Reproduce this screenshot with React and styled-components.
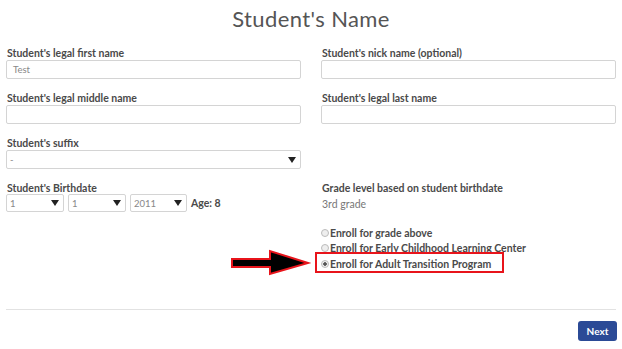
import React from 'react'
import styled, { createGlobalStyle } from 'styled-components'

const GlobalStyle = createGlobalStyle`
body{
  margin: 0;
  background: #fff;
  font-family: 'Lato', 'Noto Sans', sans-serif;
  color: #444;
}
`

const Page = styled.div`
width: 622px;
height: 349px;
padding: 0 6px;
box-sizing: border-box;
overflow: hidden;
`

const Title = styled.h1`
margin: 0;
padding-top: 5px;
height: 47px;
box-sizing: border-box;
text-align: center;
font-size: 22px;
font-weight: 400;
letter-spacing: 0.4px;
color: #555;
`

const Grid = styled.div`
display: grid;
grid-template-columns: 295px 295px;
column-gap: 20px;
row-gap: 13px;
`

const Field = styled.div`
display: flex;
flex-direction: column;
`

const Label = styled.div`
font-size: 10.5px;
line-height: 12px;
font-weight: 700;
color: #4a4a4a;
padding-left: 1px;
margin-bottom: ${props => props.tight ? '0' : '1px'};
`

const TextInput = styled.div`
height: 19px;
box-sizing: border-box;
border: 1px solid #d4d4d4;
border-radius: 2px;
padding: 0 6px;
font-size: 9.5px;
line-height: 17px;
color: #888;
`

const SelectBox = styled.div`
width: ${props => props.width ? props.width + 'px' : '100%'};
height: ${props => props.short ? '18px' : '19px'};
box-sizing: border-box;
border: 1px solid #d4d4d4;
border-radius: 2px;
padding: 0 4px 0 3px;
display: flex;
align-items: center;
justify-content: space-between;
font-size: 9.5px;
color: #888;
`

const Caret = styled.span`
width: 0;
height: 0;
border-left: 4.5px solid transparent;
border-right: 4.5px solid transparent;
border-top: 6px solid #222;
`

const DateRow = styled.div`
display: flex;
align-items: center;
gap: 4px;
`

const Age = styled.span`
font-size: 10.5px;
font-weight: 700;
color: #4a4a4a;
`

const Grade = styled.div`
font-size: 10.5px;
line-height: 12px;
color: #777;
margin-top: 3px;
padding-left: 1px;
`

const Options = styled.div`
display: flex;
flex-direction: column;
margin-top: 15px;
`

const Option = styled.div`
position: relative;
display: flex;
align-items: center;
height: 15.5px;
font-size: 10.5px;
font-weight: 700;
color: #4a4a4a;
`

const Radio = styled.span`
width: 6px;
height: 6px;
border-radius: 50%;
border: 1px solid #bbb;
background: ${props => props.checked ? 'radial-gradient(circle, #555 0 1.5px, #eee 2px)' : '#eee'};
margin-right: 1px;
flex-shrink: 0;
`

const Highlight = styled.span`
position: absolute;
left: -6px;
top: -4px;
width: 185px;
height: 17px;
border: 2px solid #e8141b;
pointer-events: none;
`

const Arrow = styled.svg`
position: absolute;
left: -91px;
top: -7px;
`

const Footer = styled.div`
margin-top: 37px;
border-top: 1px solid #e2e2e2;
padding-top: 11px;
display: flex;
justify-content: flex-end;
`

const NextButton = styled.button`
width: 39px;
height: 20px;
border: none;
border-radius: 3px;
background: #2b4a96;
color: #fff;
font-family: 'Lato', sans-serif;
font-weight: 700;
font-size: 10px;
padding: 0;
margin-right: -1px;
`

const App = () => {
  return (
    <Page>
      <GlobalStyle />
      <Title>Student's Name</Title>
      <Grid>
        <Field>
          <Label>Student's legal first name</Label>
          <TextInput>Test</TextInput>
        </Field>
        <Field>
          <Label>Student's nick name (optional)</Label>
          <TextInput />
        </Field>
        <Field>
          <Label>Student's legal middle name</Label>
          <TextInput />
        </Field>
        <Field>
          <Label>Student's legal last name</Label>
          <TextInput />
        </Field>
        <Field>
          <Label>Student's suffix</Label>
          <SelectBox>
            <span>-</span>
            <Caret />
          </SelectBox>
        </Field>
        <div />
        <Field>
          <Label tight>Student's Birthdate</Label>
          <DateRow>
            <SelectBox width={58} short><span>1</span><Caret /></SelectBox>
            <SelectBox width={58} short><span>1</span><Caret /></SelectBox>
            <SelectBox width={57} short><span>2011</span><Caret /></SelectBox>
            <Age>Age: 8</Age>
          </DateRow>
        </Field>
        <Field>
          <Label>Grade level based on student birthdate</Label>
          <Grade>3rd grade</Grade>
          <Options>
            <Option><Radio />Enroll for grade above</Option>
            <Option><Radio />Enroll for Early Childhood Learning Center</Option>
            <Option>
              <Radio checked />Enroll for Adult Transition Program
              <Highlight />
              <Arrow width="82" height="27" viewBox="0 0 82 27">
                <polygon
                  points="2,10 40,10 40,2 78,14 40,25 40,18 2,18"
                  fill="#000"
                  stroke="#e8141b"
                  strokeWidth="2"
                  strokeLinejoin="miter"
                />
              </Arrow>
            </Option>
          </Options>
        </Field>
      </Grid>
      <Footer>
        <NextButton>Next</NextButton>
      </Footer>
    </Page>
  )
}

export default App
